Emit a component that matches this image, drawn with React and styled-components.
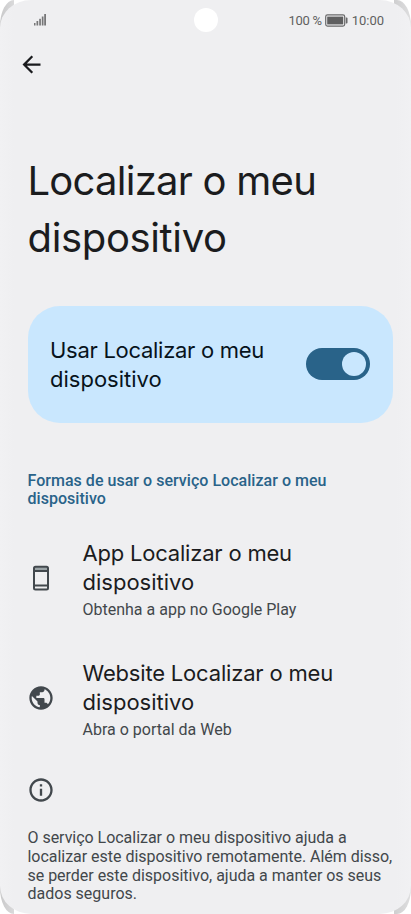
import React from 'react'
import styled, { createGlobalStyle } from 'styled-components'
import { MdArrowBack, MdPublic, MdInfoOutline } from 'react-icons/md'

const GlobalStyle = createGlobalStyle`
  * {
    box-sizing: border-box;
  }
  body {
    margin: 0;
    background: #ffffff;
    font-family: Roboto, sans-serif;
    overflow: hidden;
  }
  h1, h2, h3, p {
    margin: 0;
    font-weight: 400;
  }
`

const Phone = styled.div`
  width: 411px;
  height: 914px;
  overflow: hidden;
  border-radius: 14px / 26px;
  background: linear-gradient(
    to right,
    #c9c9ca 0,
    #dadadb 14px,
    #ffffff 14px,
    #ffffff 394px,
    #cfcfd0 394px,
    #dededf 411px
  );
`

const Screen = styled.main`
  display: flex;
  flex-direction: column;
  height: 914px;
  padding: 0 18.5px 0 27.5px;
  border-radius: 31px / 28px;
  background: linear-gradient(to right, #f1f1f3 0, #efeff1 14px, #efeff1 396px, #f1f1f3 100%);
`

const StatusBar = styled.header`
  display: grid;
  grid-template-columns: 1fr 24px 1fr;
  align-items: center;
  height: 40px;
  margin-left: -9px;
  color: #5f5f60;
  font-size: 13px;
`

const Signal = styled.svg`
  display: block;
  margin-left: 14.5px;
`

const Camera = styled.div`
  width: 24px;
  height: 24px;
  border-radius: 50%;
  background: #ffffff;
`

const Status = styled.div`
  display: flex;
  align-items: center;
  justify-content: flex-end;
  gap: 3.5px;
  padding-right: 8.5px;
  white-space: nowrap;
`

const Percent = styled.span`
  letter-spacing: -0.3px;
`

const BackButton = styled.button`
  display: flex;
  width: 27px;
  height: 27px;
  margin: 10.5px 0 0 -9.5px;
  padding: 0;
  border: 0;
  background: none;
  color: #1a1b1e;
  font-size: 27px;
`

const Title = styled.h1`
  margin-top: 74.5px;
  color: #1b1c1e;
  font-family: Inter, sans-serif;
  font-size: 40px;
  line-height: 57px;
`

const Line = styled.span`
  display: block;
  white-space: nowrap;
  letter-spacing: ${props => props.$tracking || 0}px;
`

const Card = styled.section`
  display: flex;
  flex: none;
  align-items: center;
  justify-content: space-between;
  height: 117px;
  margin-top: 40px;
  padding: 0 22.5px;
  border-radius: 32px;
  background: #c9e7fe;
`

const ItemTitle = styled.h2`
  color: ${props => props.$color || '#1b1c1e'};
  font-family: Inter, sans-serif;
  font-size: 22px;
  line-height: 28.5px;
`

const Switch = styled.div`
  display: flex;
  align-items: center;
  justify-content: flex-end;
  width: 64px;
  height: 32px;
  margin-top: -1px;
  padding: 0 4px;
  border-radius: 16px;
  background: #296389;
`

const Knob = styled.span`
  width: 24px;
  height: 24px;
  border-radius: 50%;
  background: #c9e7fe;
`

const SectionTitle = styled.h3`
  margin-top: 48.5px;
  color: #296389;
  font-size: 16px;
  font-weight: 500;
  line-height: 18.75px;
`

const List = styled.div`
  display: flex;
  flex-direction: column;
  gap: 38px;
  margin-top: 29.5px;
`

const Item = styled.div`
  display: grid;
  grid-template-columns: 55px 1fr;
  align-items: center;
  height: 82px;
`

const ItemIcon = styled.div`
  display: flex;
  margin-bottom: 4px;
  margin-left: -0.5px;
  color: #42484d;
  font-size: 28px;
`

const Summary = styled.p`
  margin-top: ${props => props.$top || 0}px;
  color: #42474b;
  font-size: 16px;
  line-height: 18.75px;
`

const Info = styled(ItemIcon)`
  margin: 35px 0 25.5px -0.5px;
`

const SignalIcon = () => (
  <Signal width="14" height="12" viewBox="0 0 14 12" fill="#777778">
    <rect x="1" y="9" width="1.5" height="2.5" />
    <rect x="3.5" y="7" width="1.7" height="4.5" />
    <rect x="6.2" y="4.8" width="1.7" height="6.7" />
    <rect x="8.8" y="2.5" width="1.7" height="9" />
    <rect x="11.2" y="0" width="1.8" height="11.5" />
  </Signal>
)

const BatteryIcon = () => (
  <svg width="23" height="13" viewBox="0 0 23 13">
    <rect x="0.7" y="0.9" width="19" height="11.2" rx="1.8" fill="none" stroke="#69696a" strokeWidth="1.2" />
    <rect x="2.2" y="2.6" width="16" height="7.8" fill="#5f5f60" />
    <path d="M20.8 3.6h.8q.9 0 .9.9v4q0 .9-.9.9h-.8z" fill="#69696a" />
  </svg>
)

const PhoneIcon = () => (
  <svg width="28" height="28" viewBox="0 0 28 28">
    <rect x="7" y="3.2" width="14" height="3" fill="#9aa3a6" />
    <rect x="7" y="2.8" width="14" height="22.8" rx="1.5" fill="none" stroke="#42484d" strokeWidth="2" />
    <path d="M7 6.9h14M7 21.6h14" stroke="#42484d" strokeWidth="2" />
  </svg>
)

const items = [
  {
    icon: <PhoneIcon />,
    lines: [['App Localizar o meu', -0.2], ['dispositivo', 0]],
    summary: 'Obtenha a app no Google Play',
  },
  {
    icon: <MdPublic />,
    lines: [['Website Localizar o meu', -0.18], ['dispositivo', 0]],
    summary: 'Abra o portal da Web',
  },
]

const App = () => (
  <>
    <GlobalStyle />
    <Phone>
      <Screen>
        <StatusBar>
          <SignalIcon />
          <Camera />
          <Status>
            <Percent>100 %</Percent>
            <BatteryIcon />
            <span>10:00</span>
          </Status>
        </StatusBar>
        <BackButton aria-label="Voltar">
          <MdArrowBack />
        </BackButton>
        <Title>
          <Line $tracking={-0.75}>Localizar o meu</Line>
          <Line $tracking={-0.35}>dispositivo</Line>
        </Title>
        <Card>
          <ItemTitle $color="#07131b">
            <Line $tracking={-0.28}>Usar Localizar o meu</Line>
            <Line $tracking={0}>dispositivo</Line>
          </ItemTitle>
          <Switch role="switch" aria-checked="true">
            <Knob />
          </Switch>
        </Card>
        <SectionTitle>
          <Line $tracking={0.03}>Formas de usar o serviço Localizar o meu</Line>
          <Line $tracking={0.03}>dispositivo</Line>
        </SectionTitle>
        <List>
          {items.map(item => (
            <Item key={item.summary}>
              <ItemIcon>{item.icon}</ItemIcon>
              <div>
                <ItemTitle>
                  {item.lines.map(([text, tracking]) => (
                    <Line key={text} $tracking={tracking}>{text}</Line>
                  ))}
                </ItemTitle>
                <Summary $top={5}>{item.summary}</Summary>
              </div>
            </Item>
          ))}
        </List>
        <Info>
          <MdInfoOutline />
        </Info>
        <Summary>
          <Line $tracking={-0.03}>O serviço Localizar o meu dispositivo ajuda a</Line>
          <Line $tracking={-0.03}>localizar este dispositivo remotamente. Além disso,</Line>
          <Line $tracking={-0.02}>se perder este dispositivo, ajuda a manter os seus</Line>
          <Line>dados seguros.</Line>
        </Summary>
      </Screen>
    </Phone>
  </>
)

export default App
